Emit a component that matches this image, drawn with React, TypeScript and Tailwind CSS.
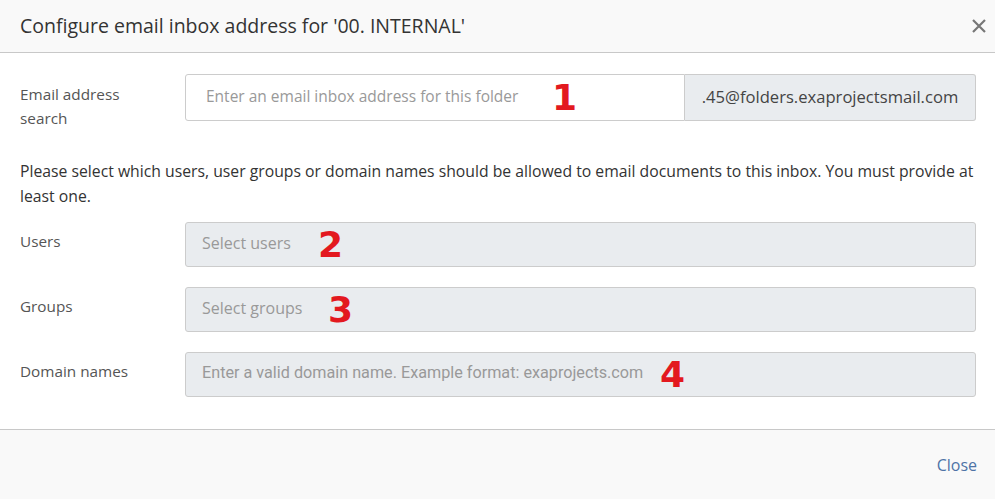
const FONT = { fontFamily: '"Open Sans", "Noto Sans", sans-serif' };

const Mark = ({ n, className }: { n: string; className: string }) => (
  <span
    className={`pointer-events-none absolute top-1/2 -translate-y-1/2 text-[36px] font-extrabold leading-none text-[#e3191f] ${className}`}
    style={{ fontFamily: '"DejaVu Sans", sans-serif' }}
  >
    {n}
  </span>
);

const Row = ({
  label,
  placeholder,
  mark,
  markClass,
  condensed,
}: {
  label: string;
  placeholder: string;
  mark: string;
  markClass: string;
  condensed?: boolean;
}) => (
  <div className="flex items-start">
    <div className="w-[165px] pt-[7px] text-[15.3px] leading-6 text-[#555]">{label}</div>
    <div className="relative flex h-[45px] flex-1 items-center rounded-[3px] border border-[#ccc] bg-[#e9ecef] px-4">
      <span
        className={condensed ? 'pb-[2px] text-[16.2px] text-[#999]' : 'pb-[3px] text-[16px] text-[#999]'}
        style={condensed ? { fontFamily: 'Roboto, sans-serif' } : undefined}
      >
        {placeholder}
      </span>
      <Mark n={mark} className={markClass} />
    </div>
  </div>
);

export default function App() {
  return (
    <div className="flex h-[499px] w-[995px] flex-col bg-white text-[#333]" style={FONT}>
      <div className="flex h-[53px] items-center justify-between border-b border-[#c8c8c8] bg-[#f9f9f9] pl-5 pr-[10px]">
        <h1 className="text-[19.5px] text-[#333]">Configure email inbox address for '00. INTERNAL'</h1>
        <svg width="16" height="16" viewBox="0 0 16 16" className="mr-[-2px]">
          <path d="M2 2 L14 14 M14 2 L2 14" stroke="#777" strokeWidth="2.2" />
        </svg>
      </div>

      <div className="flex flex-1 flex-col pl-5 pr-[19px] pt-[21px]">
        <div className="flex items-start">
          <div className="w-[165px] pt-[8px] text-[15.3px] leading-6 text-[#555]">
            Email address
            <br />
            search
          </div>
          <div className="flex h-[47px] flex-1">
            <div className="relative flex w-[500px] items-center rounded-l-[3px] border border-[#ccc] bg-white px-5">
              <span className="pb-[1px] text-[15.5px] text-[#999]">Enter an email inbox address for this folder</span>
              <Mark n="1" className="left-[366px]" />
            </div>
            <div className="flex flex-1 items-center justify-center rounded-r-[3px] border border-l-0 border-[#ccc] bg-[#e9ecef] pb-[1px] text-[16.6px] text-[#444]">
              .45@folders.exaprojectsmail.com
            </div>
          </div>
        </div>

        <p className="mt-[29px] text-[15.75px] leading-[25px] text-[#333]">
          Please select which users, user groups or domain names should be allowed to email documents to this inbox. You must provide at least one.
        </p>

        <div className="mt-[13px] flex flex-col gap-[20px]">
          <Row label="Users" placeholder="Select users" mark="2" markClass="left-[132px]" />
          <Row label="Groups" placeholder="Select groups" mark="3" markClass="left-[142px]" />
          <Row
            label="Domain names"
            placeholder="Enter a valid domain name. Example format: exaprojects.com"
            mark="4"
            markClass="left-[474px]"
            condensed
          />
        </div>
      </div>

      <div className="flex h-[70px] items-center justify-end border-t border-[#c8c8c8] bg-[#f9f9f9] px-[18px]">
        <button className="text-[16px] text-[#4e73a6]">Close</button>
      </div>
    </div>
  );
}
